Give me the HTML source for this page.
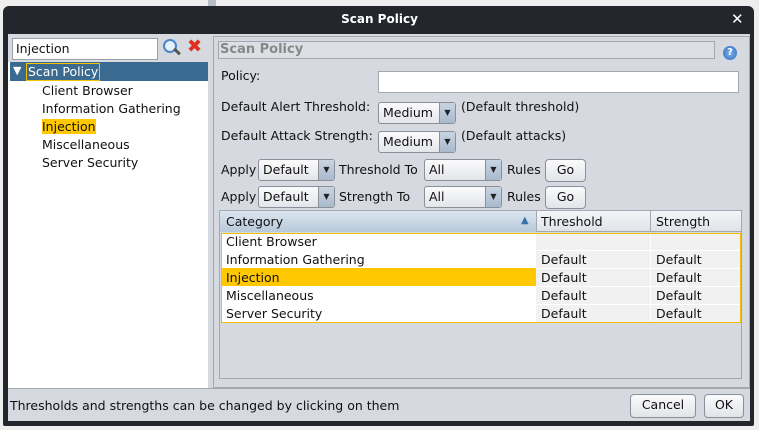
<!DOCTYPE html>
<html><head><style>
*{box-sizing:border-box;margin:0;padding:0}
body{width:759px;height:430px;background:#eeeeee;font-family:"DejaVu Sans","Liberation Sans",sans-serif;font-size:12.5px;color:#111;position:relative;overflow:hidden}
.a{position:absolute}
.dlg{left:3px;top:6px;width:751px;height:420px;background:#23262d;border-radius:6px 6px 2px 2px}
.title{left:0;top:0;width:759px;text-align:center;top:12px;color:#fff;font-weight:bold;font-size:12px}
.body{left:8px;top:34px;width:742px;height:387px;background:#d6d9df}
.sel{background:#fff;border:1px solid #9aa0a8;height:22px;border-radius:3px;padding:2px 4px;font-size:12.5px}
.combo{background:linear-gradient(#fbfbfc,#e3e5ea);border:1px solid #8a8f98;border-radius:3px;height:22px;padding:2px 4px}
.combo .arr{position:absolute;right:0;top:0;width:16px;height:20px;background:linear-gradient(#c8d4e2,#a9bace);border-left:1px solid #8a8f98;font-size:8px;text-align:center;line-height:20px;color:#222}
.btn{background:linear-gradient(#fbfbfc,#e2e4e9);border:1px solid #8a8f98;border-radius:4px;text-align:center;line-height:20px}
td{padding:0 5px;height:18px;white-space:nowrap}
</style></head><body>
<div class="a" style="left:208px;top:0;width:8px;height:18px;background:#b8bcc4"></div>
<div class="a dlg"></div>
<div class="a title">Scan Policy</div>
<div class="a" style="left:731px;top:10px;color:#fff;font-weight:bold;font-size:15px">✕</div>
<div class="a body"></div>
<!-- left -->
<div class="a sel" style="left:12px;top:38px;width:146px;height:22px;border-radius:0;padding:2px 3px">Injection</div>
<div class="a" style="left:163px;top:39px;width:14px;height:14px;border:2px solid #4a86c8;border-radius:50%;background:#e6f0fa"></div>
<div class="a" style="left:173px;top:50px;width:8px;height:3px;background:#555;transform:rotate(45deg)"></div>
<div class="a" style="left:187px;top:36px;color:#e0301e;font-size:18px;font-weight:bold">✖</div>
<div class="a" style="left:8px;top:62px;width:200px;height:326px;background:#fff"></div>
<div class="a" style="left:10px;top:62px;width:198px;height:19px;background:#3a6a8f"></div>
<div class="a" style="left:13px;top:64px;color:#fff;font-size:11px">▼</div>
<div class="a" style="left:26px;top:63px;height:18px;padding:0 1px;border:1px solid #f5c400;color:#fff;line-height:16px">Scan Policy</div>
<div class="a" style="left:42px;top:82px;line-height:18px">Client Browser<br>Information Gathering<br><span style="background:#ffc800">Injection</span><br>Miscellaneous<br>Server Security</div>
<!-- right -->
<div class="a" style="left:213px;top:36px;width:537px;height:352px;border:1px solid #a4a8af"></div>
<div class="a" style="left:218px;top:41px;width:497px;height:18px;border:1px solid #a4a8af;background:#dcdfe4;color:#888;font-weight:bold;font-size:13px;padding-left:1px;line-height:16px">Scan Policy</div>
<div class="a" style="left:723px;top:46px;width:14px;height:14px;border-radius:50%;background:radial-gradient(#7fb0e8,#2d6bc2);color:#fff;font-size:10px;font-weight:bold;text-align:center;line-height:14px">?</div>
<div class="a" style="left:221px;top:68px">Policy:</div>
<div class="a" style="left:378px;top:71px;width:361px;height:22px;background:#fff;border:1px solid #a4a8af"></div>
<div class="a" style="left:221px;top:99px">Default Alert Threshold:</div>
<div class="a combo" style="left:378px;top:102px;width:78px">Medium<div class="arr">▼</div></div>
<div class="a" style="left:461px;top:99px">(Default threshold)</div>
<div class="a" style="left:221px;top:128px">Default Attack Strength:</div>
<div class="a combo" style="left:378px;top:131px;width:78px">Medium<div class="arr">▼</div></div>
<div class="a" style="left:461px;top:128px">(Default attacks)</div>
<div class="a" style="left:221px;top:162px">Apply</div>
<div class="a combo" style="left:258px;top:159px;width:77px">Default<div class="arr">▼</div></div>
<div class="a" style="left:339px;top:162px">Threshold To</div>
<div class="a combo" style="left:424px;top:159px;width:78px">All<div class="arr">▼</div></div>
<div class="a" style="left:507px;top:162px">Rules</div>
<div class="a btn" style="left:545px;top:159px;width:41px;height:23px">Go</div>
<div class="a" style="left:221px;top:189px">Apply</div>
<div class="a combo" style="left:258px;top:186px;width:77px">Default<div class="arr">▼</div></div>
<div class="a" style="left:339px;top:189px">Strength To</div>
<div class="a combo" style="left:424px;top:186px;width:78px">All<div class="arr">▼</div></div>
<div class="a" style="left:507px;top:189px">Rules</div>
<div class="a btn" style="left:545px;top:186px;width:41px;height:23px">Go</div>
<!-- table -->
<div class="a" style="left:219px;top:210px;width:523px;height:169px;border:1px solid #a4a8af;background:#d6d9df"></div>
<div class="a" style="left:220px;top:211px;width:521px;height:21px;background:linear-gradient(#f4f6f8,#dfe3e8);border-bottom:1px solid #a4a8af"></div>
<div class="a" style="left:220px;top:211px;width:316px;height:21px;background:linear-gradient(#dce6f0,#b7c9da)"></div>
<div class="a" style="left:226px;top:214px">Category</div>
<div class="a" style="left:521px;top:215px;color:#3a70a8;font-size:10px">▲</div>
<div class="a" style="left:536px;top:211px;width:1px;height:21px;background:#a4a8af"></div>
<div class="a" style="left:541px;top:214px">Threshold</div>
<div class="a" style="left:650px;top:211px;width:1px;height:21px;background:#a4a8af"></div>
<div class="a" style="left:656px;top:214px">Strength</div>
<div class="a" style="left:221px;top:233px;width:520px;height:90px;border:1px solid #f0c000;background:#fff"></div>
<div class="a" style="left:536px;top:234px;width:204px;height:88px;background:#f1f1f1"></div>
<div class="a" style="left:222px;top:268px;width:314px;height:18px;background:#ffc800"></div>
<div class="a" style="left:536px;top:250px;width:204px;height:1px;background:#fff"></div>
<div class="a" style="left:536px;top:268px;width:204px;height:1px;background:#fff"></div>
<div class="a" style="left:536px;top:286px;width:204px;height:1px;background:#fff"></div>
<div class="a" style="left:536px;top:304px;width:204px;height:1px;background:#fff"></div>
<div class="a" style="left:650px;top:234px;width:1px;height:88px;background:#fff"></div>
<div class="a" style="left:226px;top:233px;line-height:18px">Client Browser<br>Information Gathering<br>Injection<br>Miscellaneous<br>Server Security</div>
<div class="a" style="left:541px;top:251px;line-height:18px">Default<br>Default<br>Default<br>Default</div>
<div class="a" style="left:656px;top:251px;line-height:18px">Default<br>Default<br>Default<br>Default</div>
<!-- status -->
<div class="a" style="left:8px;top:388px;width:742px;height:1px;background:#a4a8af"></div>
<div class="a" style="left:10px;top:398px">Thresholds and strengths can be changed by clicking on them</div>
<div class="a btn" style="left:630px;top:394px;width:66px;height:24px">Cancel</div>
<div class="a btn" style="left:704px;top:394px;width:40px;height:24px">OK</div>
</body></html>
